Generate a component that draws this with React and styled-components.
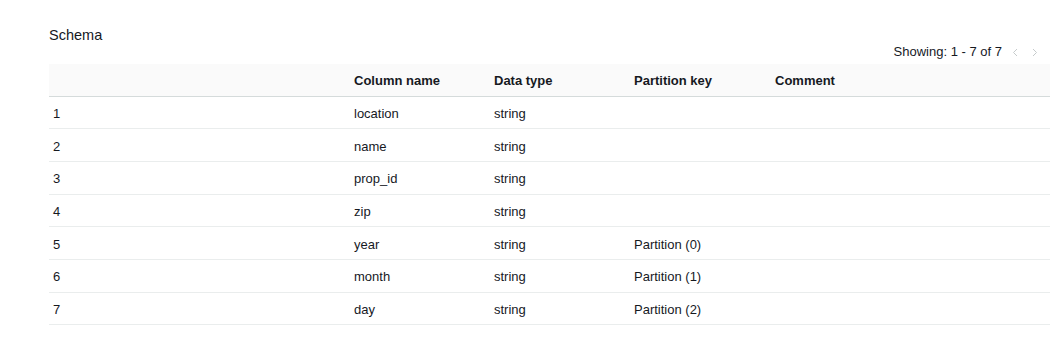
import styled, { createGlobalStyle } from "styled-components";
import React from "react";

// ============ CSS ============== //
const GlobalStyle = createGlobalStyle`
  body {
    margin: 0;
    background: #ffffff;
    font-family: "Liberation Sans", Arial, sans-serif;
    color: #16191f;
  }
`;

const Cont = styled.div`
  width: 100%;
  box-sizing: border-box;
  padding: 27px 0 0 49px;
`;

const TopBar = styled.div`
  display: flex;
  justify-content: space-between;
  align-items: flex-start;
  height: 37px;
`;

const Title = styled.h2`
  margin: 0;
  font-size: 14.5px;
  font-weight: 400;
  line-height: 17px;
  color: #16191f;
`;

const Pager = styled.div`
  display: flex;
  align-items: center;
  gap: 6px;
  margin-top: 17px;
  padding-right: 8px;
  font-size: 13px;
  line-height: 16px;
  color: #16191f;
`;

const PageBtn = styled.span`
  display: flex;
  align-items: center;
  justify-content: center;
  width: 14px;
  height: 16px;
  color: #c6cbcc;
`;

const Table = styled.table`
  width: 100%;
  border-collapse: collapse;
  table-layout: fixed;
  font-size: 13px;
`;

const HeadCell = styled.th`
  box-sizing: border-box;
  height: 32px;
  padding: 1px 4px 0;
  background: #fafafa;
  border-bottom: 1px solid #d5dbdb;
  text-align: left;
  font-weight: 700;
  color: #16191f;
`;

const Cell = styled.td`
  box-sizing: border-box;
  height: 32.7px;
  padding: 2px 4px 0;
  border-bottom: 1px solid #eaeded;
  color: #16191f;
  vertical-align: middle;
`;

// ============ Data ============== //
const columns = [
  { label: "", width: 301 },
  { label: "Column name", width: 140 },
  { label: "Data type", width: 140 },
  { label: "Partition key", width: 141 },
  { label: "Comment" },
];

const rows = [
  ["location", "string", ""],
  ["name", "string", ""],
  ["prop_id", "string", ""],
  ["zip", "string", ""],
  ["year", "string", "Partition (0)"],
  ["month", "string", "Partition (1)"],
  ["day", "string", "Partition (2)"],
];

const Chevron = ({ dir }) => (
  <svg width="6" height="9" viewBox="0 0 6 9" fill="none">
    <path
      d={dir === "left" ? "M5 1L1.5 4.5L5 8" : "M1 1L4.5 4.5L1 8"}
      stroke="currentColor"
      strokeWidth="1"
    />
  </svg>
);

// ============ Function ============== //
const App = () => {
  return (
    <Cont>
      <GlobalStyle />
      <TopBar>
        <Title>Schema</Title>
        <Pager>
          <span>Showing: 1 - 7 of 7</span>
          <PageBtn>
            <Chevron dir="left" />
          </PageBtn>
          <PageBtn>
            <Chevron dir="right" />
          </PageBtn>
        </Pager>
      </TopBar>
      <Table>
        <colgroup>
          {columns.map((c, i) => (
            <col key={i} style={c.width ? { width: c.width } : undefined} />
          ))}
        </colgroup>
        <thead>
          <tr>
            {columns.map((c, i) => (
              <HeadCell key={i}>{c.label}</HeadCell>
            ))}
          </tr>
        </thead>
        <tbody>
          {rows.map((r, i) => (
            <tr key={i}>
              <Cell>{i + 1}</Cell>
              <Cell>{r[0]}</Cell>
              <Cell>{r[1]}</Cell>
              <Cell>{r[2]}</Cell>
              <Cell />
            </tr>
          ))}
        </tbody>
      </Table>
    </Cont>
  );
};

export default App;
